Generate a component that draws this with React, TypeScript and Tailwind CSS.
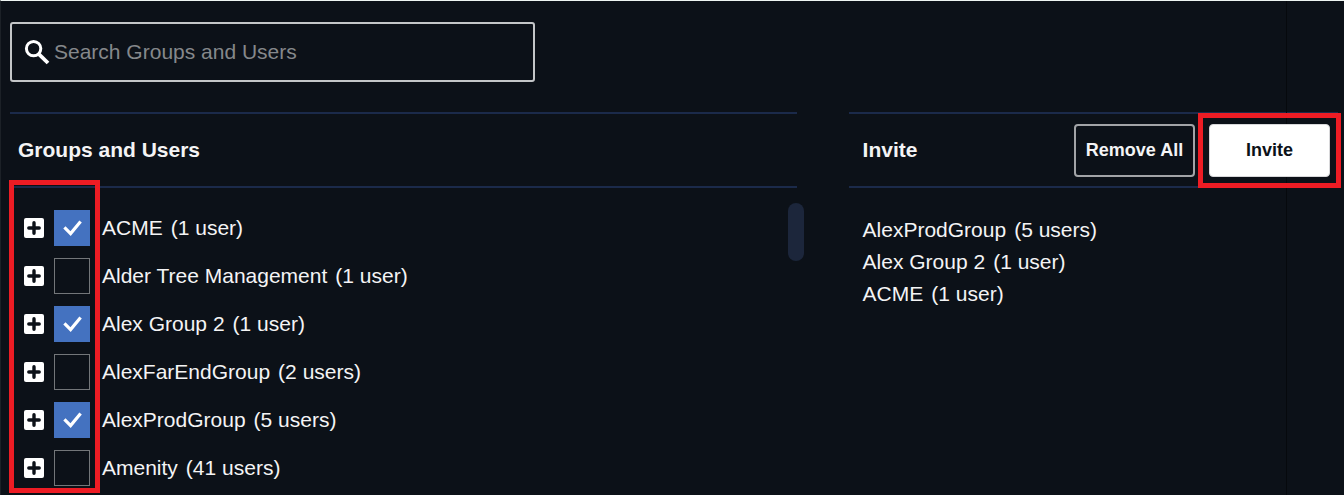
import { useState } from "react";

interface Group {
  id: string;
  name: string;
  users: number;
}

const groups: Group[] = [
  { id: "acme", name: "ACME", users: 1 },
  { id: "alder", name: "Alder Tree Management", users: 1 },
  { id: "alex2", name: "Alex Group 2", users: 1 },
  { id: "far", name: "AlexFarEndGroup", users: 2 },
  { id: "prod", name: "AlexProdGroup", users: 5 },
  { id: "amenity", name: "Amenity", users: 41 },
];

function GroupLabel({ group }: { group: Group }) {
  return (
    <span className="flex gap-2">
      <span>{group.name}</span>
      <span>
        ({group.users} {group.users === 1 ? "user" : "users"})
      </span>
    </span>
  );
}

function SearchBox() {
  return (
    <label className="flex h-[60px] w-[39.5%] items-center rounded-[3px] border-2 border-[#c4c6c8] pl-3">
      <svg viewBox="0 0 26 26" className="h-[26px] w-[26px] shrink-0" fill="none" stroke="#fff">
        <circle cx="9.6" cy="9.6" r="7.2" strokeWidth="3" />
        <path d="M14.6 14.8 24 24" strokeWidth="3.8" />
      </svg>
      <input
        type="text"
        aria-label="Search Groups and Users"
        placeholder="Search Groups and Users"
        className="min-w-0 flex-1 bg-transparent pl-1 text-[21px] text-white outline-none placeholder:text-[#85888b]"
      />
    </label>
  );
}

function GroupRow({ group, checked, onToggle }: { group: Group; checked: boolean; onToggle: () => void }) {
  return (
    <li className="flex h-12 items-center pl-3.5">
      <button type="button" aria-label={`Expand ${group.name}`} className="mr-2.5 h-5 w-5 shrink-0">
        <svg viewBox="0 0 20 20" className="block h-5 w-5">
          <rect width="20" height="20" rx="2" fill="#fff" />
          <path d="M10 4.8v10.4M4.8 10h10.4" stroke="#0c1118" strokeWidth="3.4" strokeLinecap="round" />
        </svg>
      </button>
      <label className="flex items-center gap-3">
        <span className="relative h-9 w-9 shrink-0">
          <input
            type="checkbox"
            checked={checked}
            onChange={onToggle}
            className="block h-9 w-9 appearance-none border border-[#737679] checked:border-[#4472c0] checked:bg-[#4472c0]"
          />
          {checked && (
            <svg viewBox="0 0 36 36" className="pointer-events-none absolute inset-0" fill="none">
              <path d="M10.4 17.4 16.6 23.6 26.6 11.4" stroke="#fff" strokeWidth="3.2" />
            </svg>
          )}
        </span>
        <GroupLabel group={group} />
      </label>
    </li>
  );
}

export default function App() {
  const [selected, setSelected] = useState<string[]>(["prod", "alex2", "acme"]);

  function toggle(id: string) {
    setSelected((prev) => (prev.includes(id) ? prev.filter((s) => s !== id) : [...prev, id]));
  }

  return (
    <div className="relative min-h-screen overflow-hidden border-t border-t-[#eef5f2] border-l border-l-[#1c2127] bg-[#0c1118] pt-[21px] pr-1.5 pl-[9px] font-['Liberation_Sans',Arial,sans-serif] text-[21px] leading-8 text-[#f4f4f5]">
      <div className="absolute inset-y-0 right-[57px] w-px bg-[#06090d]" />
      <SearchBox />

      <main className="mt-[30px] grid grid-cols-[45fr_28fr] gap-[52px]">
        <section>
          <div className="flex h-[76px] items-center border-y-2 border-[#1b2a4a] pl-2">
            <h2 className="font-bold">Groups and Users</h2>
          </div>
          <div className="relative pt-4">
            <ul>
              {groups.map((g) => (
                <GroupRow key={g.id} group={g} checked={selected.includes(g.id)} onToggle={() => toggle(g.id)} />
              ))}
            </ul>
            <div className="absolute top-[15px] -right-[7px] h-[58px] w-4 rounded-full bg-[#1c263b]" />
            <div className="pointer-events-none absolute -top-2 -left-px h-[313px] w-[91px] border-[5px] border-[#ed1c24]" />
          </div>
        </section>

        <section>
          <div className="flex h-[76px] items-center border-y-2 border-[#1b2a4a] pr-2 pl-3.5">
            <h2 className="flex-1 font-bold">Invite</h2>
            <button
              type="button"
              onClick={() => setSelected([])}
              className="h-[53px] w-[121px] rounded-[4px] border-2 border-[#a2a4a7] text-lg font-bold whitespace-nowrap"
            >
              Remove All
            </button>
            <div className="relative ml-3.5">
              <button
                type="button"
                className="block h-[53px] w-[121px] rounded-[4px] border border-[#d8d8da] bg-white text-lg font-bold text-[#0c1118]"
              >
                Invite
              </button>
              <div className="pointer-events-none absolute -inset-x-[11px] -inset-y-[11px] border-[5px] border-[#ed1c24]" />
            </div>
          </div>
          <ul className="pt-[26px] pl-3.5">
            {selected.map((id) => (
              <li key={id}>
                <GroupLabel group={groups.find((g) => g.id === id)!} />
              </li>
            ))}
          </ul>
        </section>
      </main>
    </div>
  );
}
